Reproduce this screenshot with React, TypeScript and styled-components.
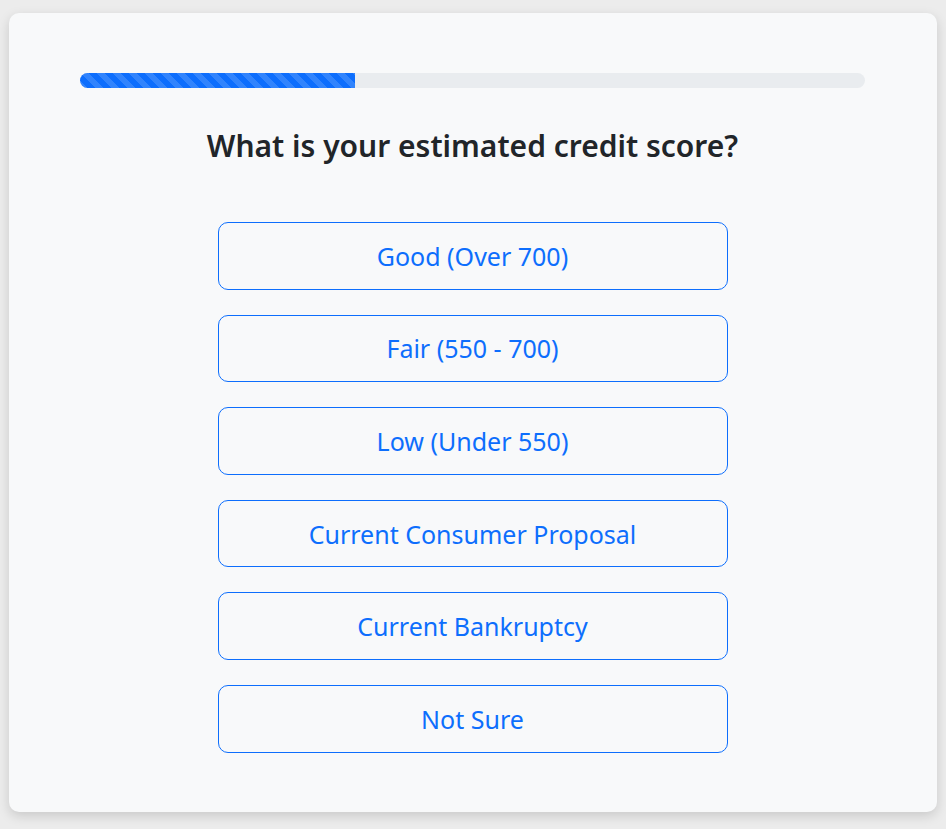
import styled, { createGlobalStyle } from 'styled-components';

const options = [
  'Good (Over 700)',
  'Fair (550 - 700)',
  'Low (Under 550)',
  'Current Consumer Proposal',
  'Current Bankruptcy',
  'Not Sure',
];

function App() {
  return (
    <>
      <GlobalStyle />
      <Page>
        <Card>
          <Progress>
            <ProgressFill $percent={35} />
          </Progress>
          <Title>What is your estimated credit score?</Title>
          <Options>
            {options.map((label) => (
              <OptionButton key={label} type="button">
                {label}
              </OptionButton>
            ))}
          </Options>
        </Card>
      </Page>
    </>
  );
}

export default App;

const GlobalStyle = createGlobalStyle`
  * {
    box-sizing: border-box;
  }
  body {
    margin: 0;
    background: #ececec;
    font-family: "Noto Sans", "Open Sans", sans-serif;
  }
`;

const Page = styled.div`
  padding: 13px 9px 17px 9px;
`;

const Card = styled.div`
  background: #f8f9fa;
  border-radius: 10px;
  box-shadow: 0 4px 12px rgba(0, 0, 0, 0.15);
  padding: 60px 72px 60px 71px;
  height: 799px;
`;

const Progress = styled.div`
  height: 15px;
  border-radius: 8px;
  background: #e9ecef;
  overflow: hidden;
`;

const ProgressFill = styled.div<{ $percent: number }>`
  height: 100%;
  width: ${(p) => p.$percent}%;
  background-color: #0d6efd;
  background-image: linear-gradient(
    45deg,
    rgba(255, 255, 255, 0.15) 25%,
    transparent 25%,
    transparent 50%,
    rgba(255, 255, 255, 0.15) 50%,
    rgba(255, 255, 255, 0.15) 75%,
    transparent 75%,
    transparent
  );
  background-size: 16px 16px;
`;

const Title = styled.h3`
  margin: 40px 0 0;
  text-align: center;
  font-size: 30px;
  font-weight: 600;
  line-height: 1.2;
  color: #212529;
`;

const Options = styled.div`
  margin: 58px auto 0;
  width: 510px;
  display: flex;
  flex-direction: column;
  gap: 25px;
`;

const OptionButton = styled.button`
  height: 67.6px;
  border: 1px solid #0d6efd;
  border-radius: 10px;
  background: transparent;
  color: #0d6efd;
  font-family: inherit;
  font-size: 25px;
  cursor: pointer;
`;
